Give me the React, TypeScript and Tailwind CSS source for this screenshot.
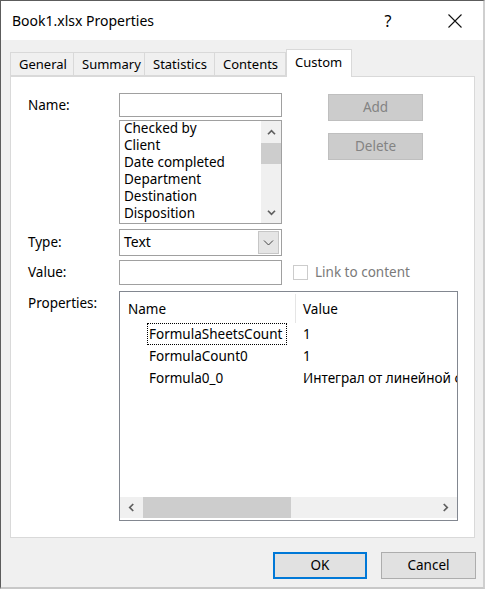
const font = { fontFamily: '"Noto Sans", "Liberation Sans", sans-serif' };

const tabs = ['General', 'Summary', 'Statistics', 'Contents', 'Custom'];
const tabWidths = ['w-[64px]', 'w-[72px]', 'w-[71px]', 'w-[72px]', 'w-[66px]'];

const names = ['Checked by', 'Client', 'Date completed', 'Department', 'Destination', 'Disposition'];

const props = [
  { name: 'FormulaSheetsCount', value: '1' },
  { name: 'FormulaCount0', value: '1' },
  { name: 'Formula0_0', value: 'Интеграл от линейной функции' },
];

function Chevron({ dir, className }: { dir: 'up' | 'down' | 'left' | 'right'; className?: string }) {
  const d = {
    up: 'M1 6 L5 2 L9 6',
    down: 'M1 2 L5 6 L9 2',
    left: 'M6 1 L2 5 L6 9',
    right: 'M2 1 L6 5 L2 9',
  }[dir];
  const vb = dir === 'up' || dir === 'down' ? '0 0 10 8' : '0 0 8 10';
  return (
    <svg viewBox={vb} className={className} fill="none" stroke="#606060" strokeWidth="2">
      <path d={d} />
    </svg>
  );
}

export default function App() {
  return (
    <div
      style={font}
      className="w-[485px] h-[589px] bg-[#f0f0f0] border-t border-l border-[#5c5c5c] border-r-[2px] border-r-[#cfcfcf] border-b-[2px] border-b-[#c8c8c8] flex flex-col text-[13.5px] text-black overflow-hidden"
    >
      {/* title bar */}
      <div className="h-[39px] bg-white flex items-center pl-[11px] shrink-0">
        <span className="text-[14px] flex-1">Book1.xlsx Properties</span>
        <span className="text-[16px] w-[20px] mr-[50px] text-center">?</span>
        <svg viewBox="0 0 14 14" className="w-[14px] h-[14px] mr-[21px]" stroke="#111" strokeWidth="1.1">
          <path d="M0.5 0.5 L13.5 13.5 M13.5 0.5 L0.5 13.5" />
        </svg>
      </div>

      {/* tabs */}
      <div className="flex items-end pl-[9px] mt-[9px] h-[27px] shrink-0 relative z-10 text-[13px]">
        {tabs.map((t, i) =>
          t === 'Custom' ? (
            <div
              key={t}
              className={`${tabWidths[i]} h-[28px] -mb-[1px] bg-white border border-b-0 border-[#d9d9d9] pl-[8px] pt-[3px]`}
            >
              {t}
            </div>
          ) : (
            <div
              key={t}
              className={`${tabWidths[i]} h-[24px] bg-[#f0f0f0] border border-[#d9d9d9] ${i > 0 ? '-ml-[1px]' : ''} pl-[8px] pt-[2px] whitespace-nowrap`}
            >
              {t}
            </div>
          )
        )}
      </div>

      {/* panel */}
      <div className="ml-[9px] w-[465px] h-[462px] bg-white border border-[#d9d9d9] pl-[17px] pt-[16px] shrink-0">
        {/* name row */}
        <div className="flex items-start">
          <div className="w-[91px] mt-[2px]">Name:</div>
          <div className="w-[163px] flex flex-col">
            <div className="h-[24px] border border-[#a0a0a0] bg-white" />
            <div className="h-[104px] mt-[3px] border border-[#a0a0a0] flex">
              <div className="flex-1 pl-[4px] -mt-[1px] text-[13.5px] leading-[17px]">
                {names.map((n) => (
                  <div key={n}>{n}</div>
                ))}
              </div>
              <div className="w-[20px] bg-[#f0f0f0] flex flex-col">
                <div className="h-[22px] flex items-center justify-center">
                  <Chevron dir="up" className="w-[9px] h-[7px]" />
                </div>
                <div className="h-[21px] bg-[#cdcdcd]" />
                <div className="flex-1" />
                <div className="h-[22px] flex items-center justify-center">
                  <Chevron dir="down" className="w-[9px] h-[7px]" />
                </div>
              </div>
            </div>
          </div>
          <div className="ml-[46px] mt-[1px] flex flex-col gap-[12px]">
            <div className="w-[95px] h-[27px] bg-[#cccccc] border border-[#bfbfbf] text-[#838383] flex items-center justify-center">
              Add
            </div>
            <div className="w-[95px] h-[27px] bg-[#cccccc] border border-[#bfbfbf] text-[#838383] flex items-center justify-center">
              Delete
            </div>
          </div>
        </div>

        {/* type row */}
        <div className="flex items-center mt-[5px]">
          <div className="w-[91px]">Type:</div>
          <div className="w-[163px] h-[27px] border border-[#a0a0a0] flex items-center">
            <span className="flex-1 pl-[4px] text-[14px] -mt-[2px]">Text</span>
            <div className="w-[21px] h-[23px] mr-[2px] bg-[#e5e5e5] border border-[#c6c6c6] flex items-center justify-center">
              <svg viewBox="0 0 10 6" className="w-[11px] h-[6px]" fill="none" stroke="#444" strokeWidth="1">
                <path d="M0.5 0.5 L5 5 L9.5 0.5" />
              </svg>
            </div>
          </div>
        </div>

        {/* value row */}
        <div className="flex items-center mt-[4px]">
          <div className="w-[91px]">Value:</div>
          <div className="w-[163px] h-[25px] border border-[#a0a0a0]" />
          <div className="ml-[11px] w-[15px] h-[15px] border border-[#cccccc] bg-white" />
          <span className="ml-[7px] text-[#7a7a7a]">Link to content</span>
        </div>

        {/* properties row */}
        <div className="flex items-start mt-[6px]">
          <div className="w-[91px] mt-[2px]">Properties:</div>
          <div className="w-[339px] h-[230px] border border-[#828790] flex flex-col overflow-hidden">
            <div className="h-[31px] flex items-stretch shrink-0">
              <div className="w-[176px] pl-[8px] pt-[5px] border-r border-[#e5e5e5] mt-[2px]">Name</div>
              <div className="flex-1 pl-[7px] pt-[7px]">Value</div>
            </div>
            <div className="flex-1 overflow-hidden">
              {props.map((p, i) => (
                <div key={p.name} className="h-[22px] flex items-center whitespace-nowrap">
                  <div className="w-[176px] pl-[27px] h-full flex">
                    <span
                      className={`pl-[1px] pr-[4px] h-full flex items-center ${
                        i === 0 ? 'border border-dotted border-black' : 'border border-transparent'
                      }`}
                    >
                      {p.name}
                    </span>
                  </div>
                  <div className="flex-1 pl-[7px] overflow-hidden">{p.value}</div>
                </div>
              ))}
            </div>
            <div className="h-[21px] bg-[#f0f0f0] flex shrink-0 mb-[2px]">
              <div className="w-[23px] flex items-center justify-center">
                <Chevron dir="left" className="w-[7px] h-[9px]" />
              </div>
              <div className="w-[148px] bg-[#cdcdcd]" />
              <div className="flex-1" />
              <div className="w-[23px] flex items-center justify-center">
                <Chevron dir="right" className="w-[7px] h-[9px]" />
              </div>
            </div>
          </div>
        </div>
      </div>

      {/* bottom buttons */}
      <div className="flex justify-end gap-[14px] mt-[14px] pr-[7px]">
        <div className="w-[94px] h-[27px] bg-[#e1e1e1] border-2 border-[#0078d7] flex items-center justify-center">
          OK
        </div>
        <div className="w-[95px] h-[27px] bg-[#e1e1e1] border border-[#adadad] flex items-center justify-center">
          Cancel
        </div>
      </div>
    </div>
  );
}
